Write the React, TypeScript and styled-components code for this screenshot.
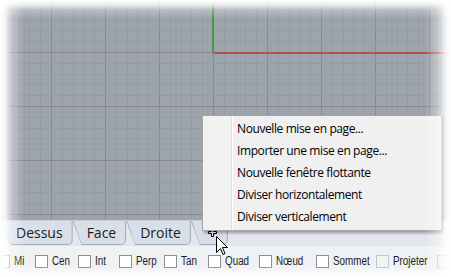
import React from "react";
import styled, { createGlobalStyle } from "styled-components";

const GlobalStyle = createGlobalStyle`
  html, body {
    margin: 0;
    padding: 0;
    background: #ffffff;
  }
  body {
    font-family: "Open Sans", "Liberation Sans", sans-serif;
  }
`;

const tabs = ["Dessus", "Face", "Droite"];

const menuItems = [
  "Nouvelle mise en page...",
  "Importer une mise en page...",
  "Nouvelle fenêtre flottante",
  "Diviser horizontalement",
  "Diviser verticalement",
];

// widths taken from the Windows auto-sized check boxes
const snaps = [
  { label: "Mi", width: 38 },
  { label: "Cen", width: 43 },
  { label: "Int", width: 41 },
  { label: "Perp", width: 45 },
  { label: "Tan", width: 44 },
  { label: "Quad", width: 51 },
  { label: "Nœud", width: 57 },
  { label: "Sommet", width: 60 },
  { label: "Projeter", width: 61, disabled: true },
  { label: "", width: 20, disabled: true },
];

const STEP = 10.8;

const Grid = () => {
  const vertical: { x: number; major: boolean }[] = [];
  for (let k = -5; k < 38; k++) {
    vertical.push({ x: Math.round(51 + STEP * k) + 0.5, major: k % 5 === 0 });
  }
  const horizontal: { y: number; major: boolean }[] = [];
  for (let k = -5; k < 17; k++) {
    horizontal.push({ y: Math.round(52 + STEP * k) + 0.5, major: k % 5 === 0 });
  }

  return (
    <svg width="451" height="220" viewBox="0 0 451 220">
      {vertical.map((l) => (
        <line
          key={`v${l.x}`}
          x1={l.x}
          x2={l.x}
          y1={0}
          y2={220}
          stroke={l.major ? "#858a92" : "#969ca4"}
        />
      ))}
      {horizontal.map((l) => (
        <line
          key={`h${l.y}`}
          x1={0}
          x2={451}
          y1={l.y}
          y2={l.y}
          stroke={l.major ? "#858a92" : "#969ca4"}
        />
      ))}
      <rect x="213" y="52" width="238" height="2" fill="#b5524f" />
      <rect x="212" y="0" width="2" height="53" fill="#3fa03a" />
    </svg>
  );
};

const PlusIcon = () => (
  <svg width="9" height="9" viewBox="0 0 9 9">
    <path
      d="M3.5 0.5h2v3h3v2h-3v3h-2v-3h-3v-2h3z"
      fill="#ffffff"
      stroke="#000000"
      strokeWidth="1"
    />
  </svg>
);

const ArrowCursor = () => (
  <svg width="13" height="20" viewBox="0 0 13 20">
    <path
      d="M0.5 0.5V16.5L4.5 12.5L7 18.5L9 17.5L6.5 11.5H11.5Z"
      fill="#ffffff"
      stroke="#000000"
      strokeWidth="1"
      strokeLinejoin="miter"
    />
  </svg>
);

export default function App() {
  return (
    <>
      <GlobalStyle />
      <Frame>
        <Viewport>
          <Grid />
        </Viewport>

        <TabStrip>
          {tabs.map((t) => (
            <Tab key={t}>{t}</Tab>
          ))}
          <Tab $narrow>
            <PlusIcon />
          </Tab>
        </TabStrip>

        <SnapBar>
          {snaps.map((s, i) => (
            <SnapItem key={i} $w={s.width}>
              <CheckBox $disabled={s.disabled} />
              {s.label && <SnapLabel>{s.label}</SnapLabel>}
            </SnapItem>
          ))}
        </SnapBar>

        <Menu>
          {menuItems.map((m) => (
            <MenuItem key={m}>{m}</MenuItem>
          ))}
        </Menu>

        <Cursor>
          <ArrowCursor />
        </Cursor>

        <FadeLeft />
        <FadeTop />
        <FadeRight />
        <FadeBottom />
      </Frame>
    </>
  );
}

const Frame = styled.div`
  position: relative;
  width: 451px;
  height: 277px;
  overflow: hidden;
  background: #ffffff;
  display: flex;
  flex-direction: column;
`;

const Viewport = styled.div`
  flex: none;
  height: 220px;
  background: #9ea4ac;
  border-bottom: 1px solid #c9ced6;

  svg {
    display: block;
  }
`;

const TabStrip = styled.div`
  flex: none;
  height: 25px;
  display: flex;
  align-items: flex-start;
  padding-left: 2px;
  background: #e3e7ed;
`;

const Tab = styled.div<{ $narrow?: boolean }>`
  position: relative;
  z-index: 0;
  height: 23px;
  display: flex;
  align-items: center;
  padding: ${(p) => (p.$narrow ? "0 11px 1px 17px" : "0 10px 1px 14px")};
  font-family: "Open Sans", "Liberation Sans", sans-serif;
  font-size: 14px;
  color: #1c1c1c;
  background: #a3acba;
  border-bottom-right-radius: 5px;
  clip-path: polygon(0 0, 100% 0, 100% 100%, 9px 100%);

  &::before {
    content: "";
    position: absolute;
    z-index: -1;
    top: 0;
    left: 1px;
    right: 1px;
    bottom: 1px;
    background: #d9dfe9;
    border-bottom-right-radius: 4px;
    clip-path: polygon(0 0, 100% 0, 100% 100%, 8px 100%);
  }
`;

const SnapBar = styled.div`
  flex: 1;
  display: flex;
  align-items: center;
  padding-bottom: 1px;
  margin-left: -3px;
  background: #eff1f4;
`;

const SnapItem = styled.div<{ $w: number }>`
  flex: none;
  width: ${(p) => p.$w}px;
  display: flex;
  align-items: center;
`;

const CheckBox = styled.span<{ $disabled?: boolean }>`
  flex: none;
  width: 13px;
  height: 13px;
  box-sizing: border-box;
  border: 1px solid ${(p) => (p.$disabled ? "#c4c6c9" : "#8e8f91")};
  background: ${(p) => (p.$disabled ? "#f1f2f3" : "#ffffff")};
`;

/* the snap bar uses a narrow face: squeeze Liberation Sans to its width */
const SnapLabel = styled.span`
  margin-left: 4px;
  font-family: "Liberation Sans", sans-serif;
  font-size: 12px;
  color: #1e1e1e;
  white-space: nowrap;
  transform: scaleX(0.82);
  transform-origin: left center;
`;

const Menu = styled.div`
  position: absolute;
  left: 202px;
  top: 115px;
  width: 240px;
  box-sizing: border-box;
  padding: 2px;
  border: 1px solid #a7a7a7;
  background: linear-gradient(
    to right,
    #f1f1f1 28px,
    #e0e1e1 28px 29px,
    #ffffff 29px 30px,
    #f0f0f0 30px
  );
  box-shadow: 2px 2px 3px rgba(0, 0, 0, 0.35);
`;

const MenuItem = styled.div`
  height: 22px;
  line-height: 22px;
  padding-left: 32px;
  font-family: "Open Sans", "Liberation Sans", sans-serif;
  font-size: 12px;
  letter-spacing: -0.4px;
  color: #000000;
  white-space: nowrap;
`;

const Cursor = styled.div`
  position: absolute;
  left: 216px;
  top: 236px;
  line-height: 0;
`;

const FadeLeft = styled.div`
  position: absolute;
  left: 0;
  top: 0;
  bottom: 0;
  width: 24px;
  background: linear-gradient(
    to right,
    rgba(255, 255, 255, 1) 0px,
    rgba(255, 255, 255, 0.9) 5px,
    rgba(255, 255, 255, 0.35) 12px,
    rgba(255, 255, 255, 0) 24px
  );
`;

const FadeTop = styled.div`
  position: absolute;
  left: 0;
  right: 0;
  top: 0;
  height: 18px;
  background: linear-gradient(
    to bottom,
    rgba(255, 255, 255, 1) 0px,
    rgba(255, 255, 255, 0.85) 4px,
    rgba(255, 255, 255, 0.3) 10px,
    rgba(255, 255, 255, 0) 18px
  );
`;

const FadeRight = styled.div`
  position: absolute;
  right: 0;
  top: 0;
  bottom: 0;
  width: 26px;
  background: linear-gradient(
    to left,
    rgba(255, 255, 255, 1) 0px,
    rgba(255, 255, 255, 0.9) 5px,
    rgba(255, 255, 255, 0.35) 14px,
    rgba(255, 255, 255, 0) 26px
  );
`;

const FadeBottom = styled.div`
  position: absolute;
  left: 0;
  right: 0;
  bottom: 0;
  height: 10px;
  background: linear-gradient(
    to top,
    rgba(255, 255, 255, 1) 0px,
    rgba(255, 255, 255, 0.7) 4px,
    rgba(255, 255, 255, 0) 10px
  );
`;
